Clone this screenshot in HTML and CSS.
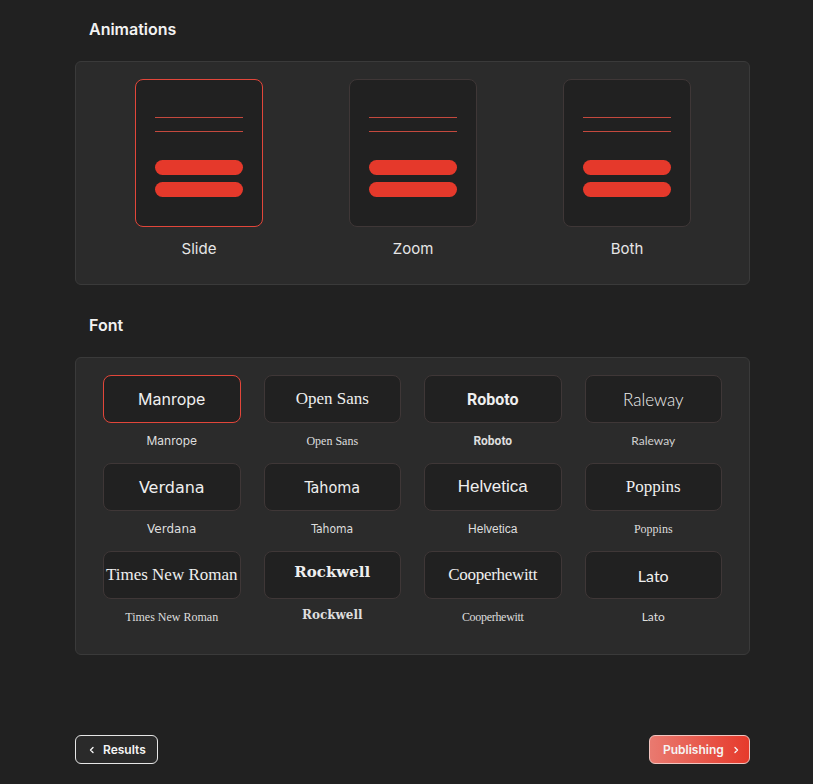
FILE: index.html
```html
<!DOCTYPE html>
<html lang="en">
  <head>
    <meta charset="UTF-8" />
    <title>Appearance</title>
    <link rel="stylesheet" href="styles.css">
  </head>
  <body>
    <div class="page">

      <!-- Animations -->
      <h3 class="section-title">Animations</h3>
      <div class="panel anim-panel">
        <div class="anim-option">
          <div class="anim-card selected">
            <span class="thin"></span>
            <span class="thin"></span>
            <span class="pill first"></span>
            <span class="pill"></span>
          </div>
          <div class="anim-label">Slide</div>
        </div>
        <div class="anim-option">
          <div class="anim-card">
            <span class="thin"></span>
            <span class="thin"></span>
            <span class="pill first"></span>
            <span class="pill"></span>
          </div>
          <div class="anim-label">Zoom</div>
        </div>
        <div class="anim-option">
          <div class="anim-card">
            <span class="thin"></span>
            <span class="thin"></span>
            <span class="pill first"></span>
            <span class="pill"></span>
          </div>
          <div class="anim-label">Both</div>
        </div>
      </div>

      <!-- Font -->
      <h3 class="section-title font-title">Font</h3>
      <div class="panel font-panel">
        <div class="font-option f-manrope">
          <div class="font-box selected">Manrope</div>
          <div class="font-label">Manrope</div>
        </div>
        <div class="font-option f-opensans">
          <div class="font-box">Open Sans</div>
          <div class="font-label">Open Sans</div>
        </div>
        <div class="font-option f-roboto">
          <div class="font-box">Roboto</div>
          <div class="font-label">Roboto</div>
        </div>
        <div class="font-option f-raleway">
          <div class="font-box">Raleway</div>
          <div class="font-label">Raleway</div>
        </div>
        <div class="font-option f-verdana">
          <div class="font-box">Verdana</div>
          <div class="font-label">Verdana</div>
        </div>
        <div class="font-option f-tahoma">
          <div class="font-box">Tahoma</div>
          <div class="font-label">Tahoma</div>
        </div>
        <div class="font-option f-helvetica">
          <div class="font-box">Helvetica</div>
          <div class="font-label">Helvetica</div>
        </div>
        <div class="font-option f-poppins">
          <div class="font-box">Poppins</div>
          <div class="font-label">Poppins</div>
        </div>
        <div class="font-option f-times">
          <div class="font-box">Times New Roman</div>
          <div class="font-label">Times New Roman</div>
        </div>
        <div class="font-option f-rockwell">
          <div class="font-box">Rockwell</div>
          <div class="font-label">Rockwell</div>
        </div>
        <div class="font-option f-cooper">
          <div class="font-box">Cooperhewitt</div>
          <div class="font-label">Cooperhewitt</div>
        </div>
        <div class="font-option f-lato">
          <div class="font-box">Lato</div>
          <div class="font-label">Lato</div>
        </div>
      </div>

      <!-- Nav buttons -->
      <div class="actions">
        <button class="btn btn-back">
          <svg width="8" height="8" viewBox="0 0 8 8"><path d="M5 1.5 L2.5 4 L5 6.5" fill="none" stroke="currentColor" stroke-width="1.4" stroke-linecap="round" stroke-linejoin="round"/></svg>
          Results
        </button>
        <button class="btn btn-next">
          Publishing
          <svg width="8" height="8" viewBox="0 0 8 8"><path d="M3 1.5 L5.5 4 L3 6.5" fill="none" stroke="currentColor" stroke-width="1.4" stroke-linecap="round" stroke-linejoin="round"/></svg>
        </button>
      </div>

    </div>
  </body>
</html>
```

FILE: styles.css
```css
* {
  box-sizing: border-box;
}

body {
  margin: 0;
  background-color: #212121;
  color: #ececec;
  font-family: Inter, 'Noto Sans', sans-serif;
}

.page {
  width: 675px;
  margin-left: 75px;
  padding-top: 19px;
}

.section-title {
  margin: 0 0 22px 14px;
  font-size: 16px;
  line-height: 20px;
  font-weight: 600;
  color: #f2f2f2;
}

.font-title {
  margin-top: 30px;
}

.panel {
  background-color: #2b2b2b;
  border: 1px solid #3a3a3a;
  border-radius: 6px;
}

/* Animations */
.anim-panel {
  display: flex;
  justify-content: space-between;
  padding: 17px 58px 25px 59px;
}

.anim-option {
  display: flex;
  flex-direction: column;
  align-items: center;
}

.anim-card {
  width: 128px;
  height: 148px;
  background-color: #212121;
  border: 1px solid #3f3737;
  border-radius: 8px;
  padding: 37px 19px 0 19px;
  display: flex;
  flex-direction: column;
}

.anim-card.selected {
  border-color: #e2463a;
}

.anim-card .thin {
  display: block;
  height: 1px;
  background-color: #c4493e;
  margin-bottom: 13px;
}

.anim-card .pill {
  display: block;
  height: 15px;
  border-radius: 8px;
  background-color: #e5392b;
  margin-bottom: 7px;
}

.anim-card .pill.first {
  margin-top: 15px;
}

.anim-label {
  margin-top: 12px;
  font-size: 15px;
  line-height: 20px;
  color: #e6e6e6;
}

/* Font grid */
.font-panel {
  display: grid;
  grid-template-columns: repeat(4, 1fr);
  column-gap: 23px;
  row-gap: 14px;
  padding: 17px 27px 29px 27px;
}

.font-option {
  display: flex;
  flex-direction: column;
  align-items: center;
}

.font-box {
  width: 100%;
  height: 48px;
  display: flex;
  align-items: center;
  justify-content: center;
  background-color: #212121;
  border: 1px solid #3f3737;
  border-radius: 8px;
  font-size: 16px;
  color: #efefef;
  white-space: nowrap;
}

.font-box.selected {
  border-color: #e2463a;
}

.font-label {
  margin-top: 10px;
  font-size: 12px;
  line-height: 16px;
  color: #dedede;
  white-space: nowrap;
}

.f-manrope { font-family: Inter, sans-serif; }
.f-opensans,
.f-poppins,
.f-times,
.f-cooper { font-family: 'Liberation Serif', serif; }
.f-opensans .font-box,
.f-poppins .font-box,
.f-times .font-box,
.f-cooper .font-box { font-size: 17px; }
.f-cooper .font-box,
.f-cooper .font-label { letter-spacing: -0.3px; }
.f-roboto { font-family: Roboto, sans-serif; font-weight: 700; }
.f-raleway { font-family: Lato, sans-serif; font-weight: 300; }
.f-raleway .font-box { font-size: 17px; }
.f-raleway .font-label { font-weight: 400; color: #cfcfcf; }
.f-verdana { font-family: 'DejaVu Sans', sans-serif; }
.f-tahoma { font-family: 'DejaVu Sans Condensed', 'DejaVu Sans', sans-serif; }
.f-helvetica { font-family: 'Liberation Sans', sans-serif; }
.f-helvetica .font-box { font-size: 17px; }
.f-rockwell { font-family: 'DejaVu Serif', serif; font-weight: 700; }
.f-rockwell .font-box { font-size: 15px; padding-bottom: 6px; }
.f-rockwell .font-label { margin-top: 8px; }
.f-lato { font-family: Lato, sans-serif; }

/* Bottom actions */
.actions {
  display: flex;
  justify-content: space-between;
  margin-top: 80px;
}

.btn {
  height: 29px;
  display: flex;
  align-items: center;
  gap: 7px;
  border-radius: 6px;
  font-family: Inter, sans-serif;
  font-size: 12px;
  font-weight: 600;
  color: #f5f5f5;
  cursor: pointer;
}

.btn-back {
  width: 83px;
  padding: 0 0 0 12px;
  background-color: #2a2a2a;
  border: 1px solid #e6e6e6;
}

.btn-next {
  width: 101px;
  padding: 0 0 0 13px;
  gap: 8px;
  background: linear-gradient(90deg, #e97a70, #e63a2b);
  border: 1px solid #f1c4bf;
}
```
